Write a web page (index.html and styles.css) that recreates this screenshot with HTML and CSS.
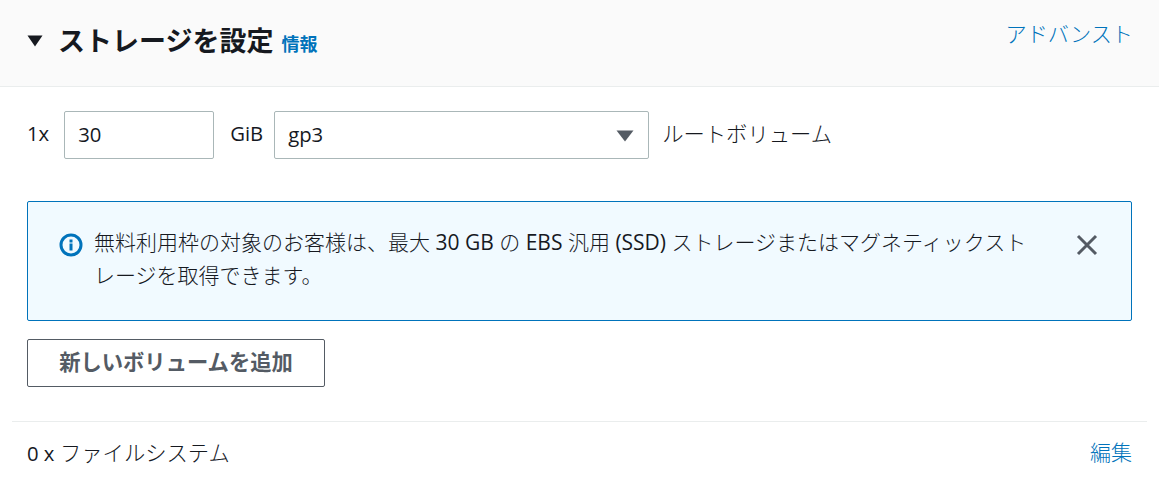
FILE: index.html
```html
<!DOCTYPE html>
<html lang="ja">
<head>
<meta charset="utf-8">
<title>ストレージを設定</title>
<link rel="stylesheet" href="styles.css">
</head>
<body>
<section class="panel">
  <header class="head">
    <div class="head-left">
      <svg class="caret" width="16" height="12" viewBox="0 0 16 12"><path d="M0.5 0.5H15.5L8 11.5Z" fill="#16191f"/></svg>
      <h2 class="title">ストレージを設定</h2>
      <a class="info">情報</a>
    </div>
    <a class="link advanced">アドバンスト</a>
  </header>
  <div class="body">
    <div class="vol-row">
      <span class="lat shift">1x</span>
      <div class="field size">30</div>
      <span class="lat gib shift">GiB</span>
      <div class="field type">gp3
        <svg class="sel-caret" width="18" height="12" viewBox="0 0 18 12"><path d="M0.5 0.5H17.5L9 11.5Z" fill="#545b64"/></svg>
      </div>
      <span class="txt root">ルートボリューム</span>
    </div>
    <div class="alert">
      <svg class="alert-icon" width="24" height="24" viewBox="0 0 24 24"><circle cx="12" cy="12" r="10" fill="none" stroke="#0073bb" stroke-width="3"/><rect x="10.5" y="10.5" width="3" height="7" fill="#0073bb"/><rect x="10.5" y="6.5" width="3" height="3" fill="#0073bb"/></svg>
      <p class="alert-text">無料利用枠の対象のお客様は、最大 <span class="lat">30 GB</span> の <span class="lat">EBS</span> 汎用 <span class="lat">(SSD)</span> ストレージまたはマグネティックスト<br>レージを取得できます。</p>
      <svg class="close" width="22" height="22" viewBox="0 0 22 22"><path d="M2 2L20 20M20 2L2 20" stroke="#545b64" stroke-width="3" fill="none"/></svg>
    </div>
    <button class="add">新しいボリュームを追加</button>
  </div>
  <footer class="foot">
    <span class="txt"><span class="lat">0 x</span> ファイルシステム</span>
    <a class="link">編集</a>
  </footer>
</section>
</body>
</html>
```
FILE: styles.css
```css
* { box-sizing: border-box; }
html, body { margin: 0; padding: 0; background: #fff; }
body { font-family: "Open Sans", "Noto Sans CJK JP", sans-serif; color: #16191f; font-size: 21px; width: 1159px; height: 499px; overflow: hidden; }
.panel { display: flex; flex-direction: column; }
.head { height: 87px; background: #fafafa; border-bottom: 1px solid #eaeded; display: flex; justify-content: space-between; padding: 20px 26px 0 27px; }
.head-left { display: flex; align-items: center; height: 40px; padding-top: 2px; }
.caret { margin-right: 15px; }
.title { margin: 0; font-size: 27px; font-weight: 700; line-height: 40px; }
.info { margin-left: 8px; font-size: 18px; font-weight: 700; color: #0073bb; margin-top: 4px; }
.link { color: #0073bb; font-size: 21px; line-height: 28px; font-weight: 300; }
.advanced { font-size: 21.15px; }
.body { padding: 24px 27px 0; }
.vol-row { display: flex; align-items: center; height: 48px; }
.txt { font-size: 21.3px; color: #16191f; font-weight: 300; }
.lat { font-size: 20.3px; color: #16191f; font-weight: 400; }
.shift { margin-top: -4px; }
.field { height: 48px; border: 1px solid #aab7b8; border-radius: 2px; display: flex; align-items: center; padding: 0 0 3px 13px; background: #fff; font-size: 20.3px; }
.size { width: 150px; margin-left: 15px; }
.gib { margin-left: 16px; }
.type { width: 375px; margin-left: 11px; position: relative; }
.sel-caret { position: absolute; right: 14px; top: 18px; }
.root { margin-left: 13px; margin-top: -5px; }
.alert { margin-top: 42px; height: 120px; border: 1px solid #0073bb; border-radius: 2px; background: #f1faff; display: flex; align-items: flex-start; padding: 24px 32px 0 31px; }
.alert-icon { flex: none; margin-top: 7px; }
.alert-text { margin: 0 0 0 11px; width: 945px; line-height: 33px; font-size: 21px; font-weight: 300; }
.alert-text .lat { font-size: 21px; }
.close { flex: none; margin-left: auto; margin-top: 9px; position: relative; left: -1px; top: -1px; }
.add { display: block; margin-top: 18px; width: 298px; height: 48px; background: #fff; border: 1px solid #545b64; border-radius: 2px; font: 700 21.3px "Open Sans", "Noto Sans CJK JP", sans-serif; color: #545b64; padding: 0 0 5px; }
.foot { margin: 34px 12px 0; border-top: 1px solid #eaeded; display: flex; justify-content: space-between; align-items: center; padding: 14px 15px 0; }
```
